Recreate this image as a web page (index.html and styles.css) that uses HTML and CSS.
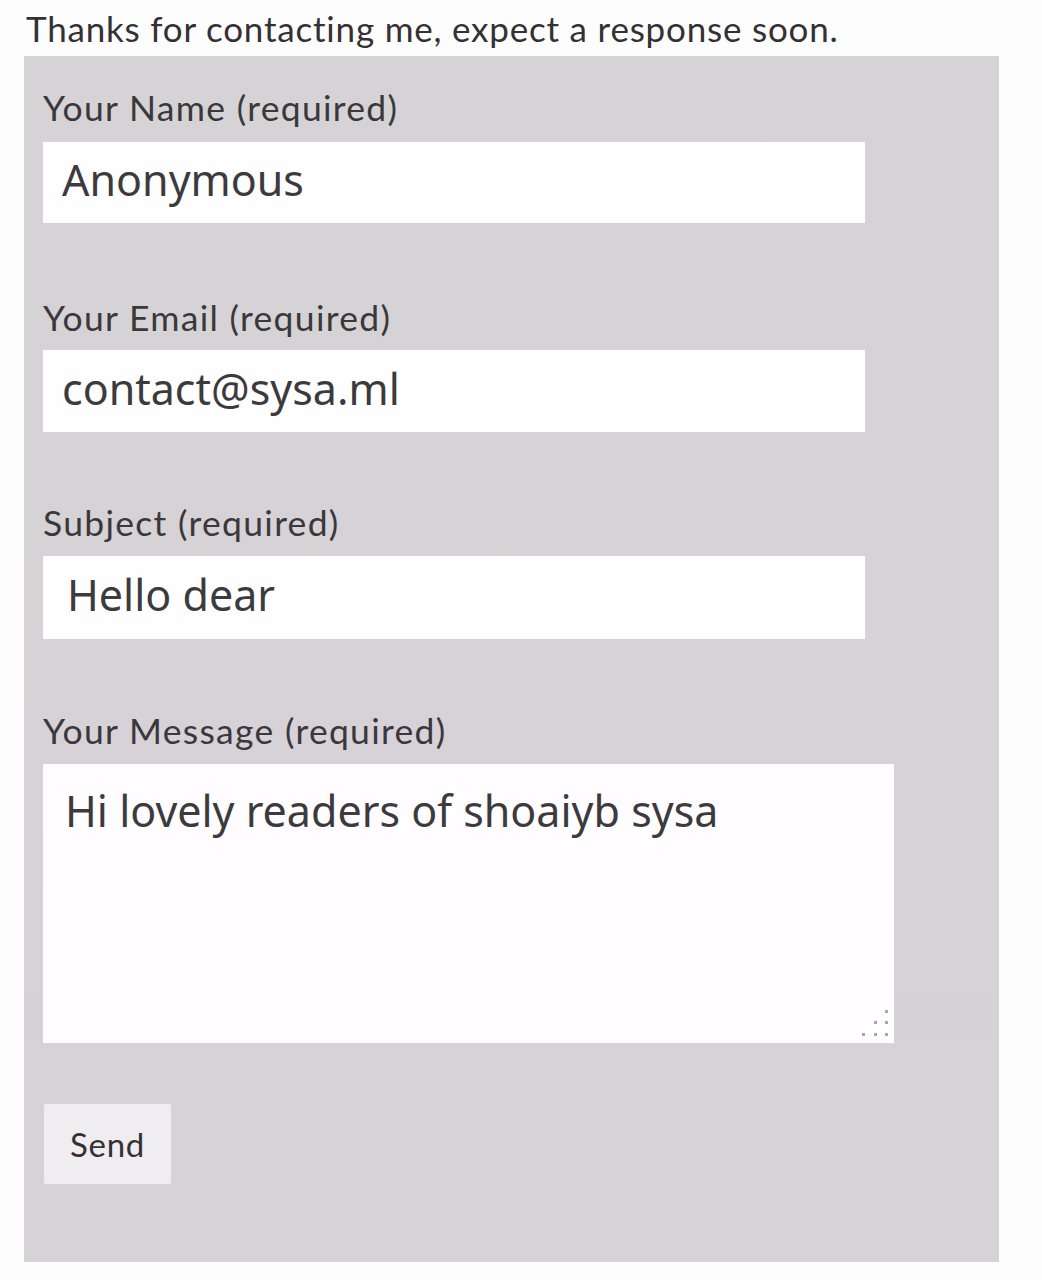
FILE: index.html
```html
<!DOCTYPE html>
<html>
<head>
<meta charset="utf-8">
<link rel="stylesheet" href="styles.css">
</head>
<body>
<p class="notice">Thanks for contacting me, expect a response soon.</p>
<form class="panel">
  <div class="field">
    <label class="label">Your Name (required)</label>
    <input class="input" type="text" value="Anonymous">
  </div>
  <div class="field">
    <label class="label">Your Email (required)</label>
    <input class="input" type="text" value="contact@sysa.ml">
  </div>
  <div class="field">
    <label class="label">Subject (required)</label>
    <input class="input input-subject" type="text" value="Hello dear">
  </div>
  <div class="field">
    <label class="label">Your Message (required)</label>
    <div class="area-wrap">
      <textarea class="area">Hi lovely readers of shoaiyb sysa</textarea>
      <svg class="grip" width="30" height="30" viewBox="0 0 30 30">
        <g fill="#a8a6a8">
          <rect x="25" y="3" width="3" height="3"/>
          <rect x="14" y="14" width="3" height="3"/>
          <rect x="25" y="14" width="3" height="3"/>
          <rect x="2" y="26" width="3" height="3"/>
          <rect x="14" y="26" width="3" height="3"/>
          <rect x="25" y="26" width="3" height="3"/>
        </g>
      </svg>
    </div>
  </div>
  <button class="send" type="button">Send</button>
</form>
</body>
</html>
```
FILE: styles.css
```css
html, body {
  margin: 0;
  padding: 0;
  background: #fefdfe;
}
body {
  font-family: Lato, "Liberation Sans", sans-serif;
  color: #333133;
}
.notice {
  margin: 0;
  padding: 6px 0 0 26px;
  font-size: 35px;
  letter-spacing: 0.8px;
  line-height: 44px;
  height: 48px;
  box-sizing: border-box;
}
.panel {
  margin: 8px 0 0 24px;
  width: 975px;
  height: 1206px;
  box-sizing: border-box;
  padding: 30px 0 0 19px;
  background: linear-gradient(#d5d3d5, #d7d1d8);
  display: flex;
  flex-direction: column;
  align-items: flex-start;
}
.field {
  display: flex;
  flex-direction: column;
  align-items: flex-start;
}
.label {
  font-size: 35.5px;
  letter-spacing: 1.3px;
  line-height: 44px;
  color: #3a383a;
}
.field:nth-child(1) .label { margin-bottom: 12px; }
.field:nth-child(2) { margin-top: 73px; }
.field:nth-child(2) .label { margin-bottom: 10px; }
.field:nth-child(3) { margin-top: 69px; }
.field:nth-child(3) .label { margin-bottom: 11px; }
.field:nth-child(4) { margin-top: 70px; }
.field:nth-child(4) .label { margin-bottom: 11px; }
.input {
  width: 822px;
  height: 81px;
  box-sizing: border-box;
  border: none;
  outline: none;
  background: #fffeff;
  padding: 0 0 6px 19px;
  font-family: "Noto Sans", sans-serif;
  font-size: 43px;
  color: #3d3a3d;
}
.field:nth-child(2) .input { height: 82px; }
.input-subject {
  height: 83px;
  padding-left: 24px;
}
.area-wrap {
  position: relative;
  width: 851px;
  height: 279px;
}
.area {
  display: block;
  width: 100%;
  height: 100%;
  box-sizing: border-box;
  border: none;
  outline: none;
  resize: none;
  background: #fffdff;
  padding: 18px 22px;
  font-family: "Noto Sans", sans-serif;
  font-size: 43px;
  line-height: 58px;
  color: #3d3a3d;
}
.grip {
  position: absolute;
  right: 4px;
  bottom: 6px;
}
.send {
  margin-top: 61px;
  margin-left: 1px;
  width: 127px;
  height: 80px;
  border: none;
  border-radius: 2px;
  background: #efedef;
  font-family: Lato, "Liberation Sans", sans-serif;
  font-size: 33px;
  letter-spacing: 0.7px;
  color: #333133;
  padding: 0;
}
```
